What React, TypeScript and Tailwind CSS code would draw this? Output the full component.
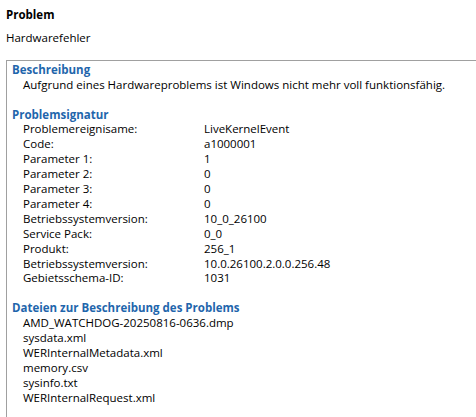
const signature: [string, string][] = [
  ['Problemereignisame:', 'LiveKernelEvent'],
  ['Code:', 'a1000001'],
  ['Parameter 1:', '1'],
  ['Parameter 2:', '0'],
  ['Parameter 3:', '0'],
  ['Parameter 4:', '0'],
  ['Betriebssystemversion:', '10_0_26100'],
  ['Service Pack:', '0_0'],
  ['Produkt:', '256_1'],
  ['Betriebssystemversion:', '10.0.26100.2.0.0.256.48'],
  ['Gebietsschema-ID:', '1031'],
];

const files = [
  'AMD_WATCHDOG-20250816-0636.dmp',
  'sysdata.xml',
  'WERInternalMetadata.xml',
  'memory.csv',
  'sysinfo.txt',
  'WERInternalRequest.xml',
];

function SectionTitle({ children }: { children: string }) {
  return <div className="font-bold text-[#1f66ac]">{children}</div>;
}

export default function App() {
  return (
    <div className="h-[417px] w-[476px] overflow-hidden bg-white text-[11.5px] leading-[14.9px] text-black [font-family:'Open_Sans',sans-serif]">
      <div className="pl-[6px] pt-[8px]">
        <div className="font-bold">Problem</div>
        <div className="mt-[8px]">Hardwarefehler</div>
      </div>

      <div className="ml-[6px] mt-[14px] border-l border-t border-[#a0a0a0] pb-10 pl-[5px] pt-[2px]">
        <SectionTitle>Beschreibung</SectionTitle>
        <div className="pl-[11px]">
          Aufgrund eines Hardwareproblems ist Windows nicht mehr voll funktionsfähig.
        </div>

        <div className="mt-[14.9px]">
          <SectionTitle>Problemsignatur</SectionTitle>
          <div className="pl-[11px]">
            {signature.map(([label, value], i) => (
              <div key={i} className="grid grid-cols-[181px_1fr]">
                <span>{label}</span>
                <span>{value}</span>
              </div>
            ))}
          </div>
        </div>

        <div className="mt-[14.9px]">
          <SectionTitle>Dateien zur Beschreibung des Problems</SectionTitle>
          <div className="pl-[11px]">
            {files.map((f) => (
              <div key={f}>{f}</div>
            ))}
          </div>
        </div>
      </div>
    </div>
  );
}
